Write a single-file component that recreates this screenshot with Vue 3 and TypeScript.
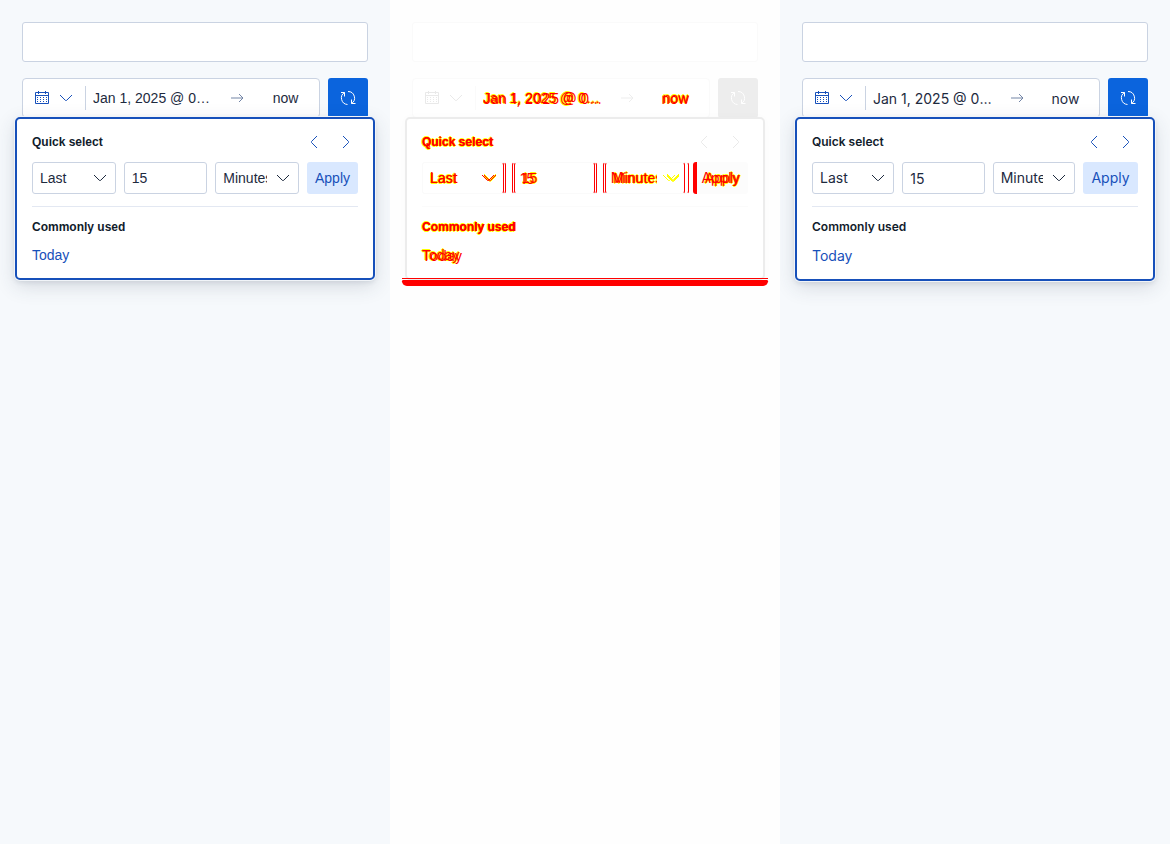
<script setup lang="ts">
import { ref } from 'vue'

type Layer = 'before' | 'after'

interface Panel {
  id: string
  label: string
  diff: boolean
  layers: Layer[]
}

const panels: Panel[] = [
  { id: 'before', label: 'Before', diff: false, layers: ['before'] },
  { id: 'diff', label: 'Difference', diff: true, layers: ['before', 'after'] },
  { id: 'after', label: 'After', diff: false, layers: ['after'] },
]

const tense = ref('Last')
const amount = ref('15')
const unit = ref('Minutes')
</script>

<template>
  <main class="compare">
    <section
      v-for="panel in panels"
      :key="panel.id"
      class="panel"
      :class="{ diff: panel.diff }"
      :aria-label="panel.label"
      :inert="panel.diff"
    >
      <div v-for="layer in panel.layers" :key="layer" class="layer" :class="layer">
        <input class="search" type="text" aria-label="Search" />

        <div class="picker">
          <div class="range">
            <button class="quick" type="button" aria-label="Date quick select">
              <svg class="icon" viewBox="0 0 16 16" aria-hidden="true">
                <path d="M1.500 2.500h13v11h-13zM1 5.500h14M4.500 1v3M11.500 1v3" />
                <path
                  class="dots"
                  d="M3 7.500h10M3 9.500h10M3 11.500h10"
                />
              </svg>
              <svg class="icon" viewBox="0 0 16 16" aria-hidden="true">
                <path d="M2 5l5.300 5.300q.7.600 1.400 0L14 5" />
              </svg>
            </button>
            <button class="date start" type="button"><span>Jan 1, 2025 @ 00:00:00.000</span></button>
            <svg class="icon arrow" viewBox="0 0 16 16" aria-hidden="true">
              <path d="M2 8h12M10 4l4 4-4 4" />
            </svg>
            <button class="date end" type="button"><span>now</span></button>
          </div>
          <button class="refresh" type="button" aria-label="Refresh">
            <svg class="icon" viewBox="0 0 16 16" aria-hidden="true">
              <path d="M8 1.500a6.500 6.500 0 0 1 3.500 12M7.500 14.500A6.500 6.500 0 0 1 4.500 2.500M11.500 9.500v4h4M1 2.500h3.500v4" />
            </svg>
          </button>

          <div class="popover">
            <div v-if="panel.diff && layer === 'after'" class="shift" aria-hidden="true"></div>
            <header class="head">
              <h2>Quick select</h2>
              <button class="step" type="button" aria-label="Previous time window">
                <svg class="icon" viewBox="0 0 16 16" aria-hidden="true">
                  <path d="M11 2L5.500 7.500q-.500.500 0 1L11 14" />
                </svg>
              </button>
              <button class="step" type="button" aria-label="Next time window">
                <svg class="icon" viewBox="0 0 16 16" aria-hidden="true">
                  <path d="M5 2l5.500 5.500q.500.500 0 1L5 14" />
                </svg>
              </button>
            </header>
            <form class="fields" @submit.prevent>
              <div class="select">
                <select v-model="tense" aria-label="Time tense">
                  <option>Last</option>
                  <option>Next</option>
                </select>
                <svg class="icon" viewBox="0 0 16 16" aria-hidden="true">
                  <path d="M2 5l5.300 5.300q.7.600 1.400 0L14 5" />
                </svg>
              </div>
              <input v-model="amount" class="amount" type="text" inputmode="numeric" aria-label="Time value" />
              <div class="select unit">
                <select v-model="unit" aria-label="Time unit">
                  <option>Minutes</option>
                  <option>Hours</option>
                  <option>Days</option>
                </select>
                <svg class="icon" viewBox="0 0 16 16" aria-hidden="true">
                  <path d="M2 5l5.300 5.300q.7.600 1.400 0L14 5" />
                </svg>
              </div>
              <button class="apply" type="submit">Apply</button>
            </form>
            <div class="common">
              <h2>Commonly used</h2>
              <a href="#today">Today</a>
            </div>
          </div>
        </div>
      </div>
    </section>
  </main>
</template>

<style>
body {
  margin: 0;
}
</style>

<style scoped>
.compare {
  display: grid;
  grid-template-columns: repeat(3, minmax(0, 1fr));
  min-height: 100vh;
}

.compare *,
.compare *::before {
  box-sizing: border-box;
}

.panel {
  --bg: #f6f9fc;
  --surface: #fff;
  --line: #cad3e2;
  --rule: #e3e8f2;
  --text: #1d2a3e;
  --title: #111c2c;
  --link: #1750ba;
  --frame: #1750ba;
  --muted: #7385a6;
  --primary: #0b64dd;
  --on-primary: #fff;
  --soft: #d9e8ff;
  display: grid;
  grid-template: minmax(0, 1fr) / minmax(0, 1fr);
  overflow: hidden;
  background: var(--bg);
}

.layer {
  grid-area: 1 / 1;
  display: flex;
  flex-direction: column;
  gap: 16px;
  padding: 22px;
  color: var(--text);
  font-size: 14px;
  line-height: 20px;
}

.before {
  font-family: "Liberation Sans", Arial, sans-serif;
}

.after {
  font-family: Inter, sans-serif;
}

button,
input,
select {
  margin: 0;
  padding: 0;
  border: 0;
  background: none;
  color: inherit;
  font: inherit;
  text-shadow: inherit;
}

.icon {
  display: block;
  flex: none;
  width: 16px;
  height: 16px;
  fill: none;
  stroke: currentColor;
  stroke-width: 1;
}

.dots {
  stroke-dasharray: 1 2;
}

.search {
  width: 100%;
  height: 40px;
  padding: 0 12px;
  border: 1px solid var(--line);
  border-radius: 3px;
  background: var(--surface);
}

.picker {
  position: relative;
  display: flex;
  gap: 8px;
}

.range {
  display: flex;
  flex: 1;
  align-items: center;
  min-width: 0;
  height: 40px;
  border: 1px solid var(--line);
  border-radius: 4px;
  background: var(--surface);
}

.quick {
  display: flex;
  flex: none;
  align-items: center;
  gap: 8px;
  height: 24px;
  padding: 0 11px;
  border-right: 1px solid var(--line);
  color: var(--link);
}

.date {
  height: 38px;
}

.start {
  flex: 1;
  min-width: 0;
  padding: 0 7px;
  text-align: left;
}

.start span {
  display: block;
  overflow: hidden;
  text-overflow: ellipsis;
  white-space: nowrap;
}

.end {
  flex: none;
  width: 67px;
}

.arrow {
  margin: 0 7px;
  color: var(--muted);
}

.after .date {
  padding-top: 2px;
}

.refresh {
  display: grid;
  flex: none;
  place-items: center;
  width: 40px;
  height: 40px;
  border-radius: 3px;
  background: var(--primary);
  color: var(--on-primary);
}

.popover {
  position: absolute;
  top: 39px;
  right: -7px;
  left: -7px;
  padding: 11px 15px;
  border: 2px solid var(--frame);
  border-radius: 5px;
  background: var(--surface);
  box-shadow:
    0 0 0 1px #f1f4f8,
    0 2px 5px rgba(43, 57, 79, 0.12),
    0 6px 20px rgba(43, 57, 79, 0.16);
}

.head {
  display: flex;
  align-items: center;
  gap: 8px;
  height: 24px;
}

h2 {
  flex: 1;
  margin: 0;
  color: var(--title);
  font-size: 12px;
  font-weight: 700;
  line-height: 18px;
}

.after h2 {
  font-weight: 600;
}

.step {
  display: grid;
  place-items: center;
  width: 24px;
  height: 24px;
  color: var(--link);
}

.fields {
  display: grid;
  grid-template-columns: repeat(3, minmax(0, 1fr)) auto;
  gap: 8px;
  margin-top: 8px;
}

.select {
  position: relative;
}

.select select {
  display: block;
  width: 100%;
  height: 32px;
  padding: 0 31px 0 7px;
  border: 1px solid var(--line);
  border-radius: 3px;
  background: var(--surface);
  appearance: none;
}

.select .icon {
  position: absolute;
  top: 8px;
  right: 8px;
  pointer-events: none;
}

.amount {
  width: 100%;
  height: 32px;
  padding: 0 7px;
  border: 1px solid var(--line);
  border-radius: 3px;
  background: var(--surface);
}

.apply {
  height: 32px;
  padding: 0 8px;
  border-radius: 3px;
  background: var(--soft);
  color: var(--link);
}

.common {
  display: flex;
  flex-direction: column;
  align-items: flex-start;
  gap: 8px;
  margin-top: 12px;
  padding-top: 11px;
  border-top: 1px solid var(--rule);
}

.common a {
  color: var(--link);
  line-height: 23px;
  text-decoration: none;
}

.after .common a {
  line-height: 24px;
}

.after .apply {
  min-width: 55px;
}

/* Difference panel: unchanged parts fade out, changed parts turn red and yellow */
.diff {
  --bg: #fefefe;
  --line: #fafafa;
  --rule: #fbfbfb;
  --text: #f00;
  --title: #f00;
  --link: #f00;
  --frame: #ececec;
  --muted: #ededed;
  --primary: #ededed;
  --on-primary: #fff;
  --soft: #fcfcfc;
}

.diff .quick,
.diff .step {
  color: #e9e9e9;
}

.diff .before {
  text-shadow: 1px 0 #ff0, -1px 0 #ff0, 0 1px #ff0, 0 -1px #ff0;
}

.diff .popover {
  box-shadow: 0 0 8px rgba(0, 0, 0, 0.02);
}

.diff .fields .select select,
.diff .fields .amount {
  border-right-color: #f00;
  border-left-color: #f00;
}

.diff .fields .select:first-child select {
  border-left-color: var(--line);
}

.diff .select .icon {
  filter: drop-shadow(0 1px #ff0) drop-shadow(0 -1px #ff0);
}

.diff .select.unit .icon {
  color: #ff0;
}

.diff .after .search,
.diff .after .range,
.diff .after .popover,
.diff .after .select select,
.diff .after .amount {
  background: none;
}

.diff .after .search,
.diff .after .range,
.diff .after .popover {
  border-color: transparent;
  box-shadow: none;
}

.diff .after .quick,
.diff .after .arrow,
.diff .after .refresh,
.diff .after .step {
  visibility: hidden;
}

.diff .after .select .icon {
  filter: none;
}

.diff .after .apply {
  padding-left: 4px;
  border-left: 4px solid #f00;
  background: none;
}

.shift {
  position: absolute;
  right: -5px;
  bottom: -7px;
  left: -5px;
  height: 8px;
  border-top: 1px solid #f00;
}

.shift::before {
  content: "";
  position: absolute;
  top: 1px;
  right: 0;
  left: 0;
  height: 6px;
  border-radius: 2px 2px 8px 8px;
  background: #f00;
}
</style>
